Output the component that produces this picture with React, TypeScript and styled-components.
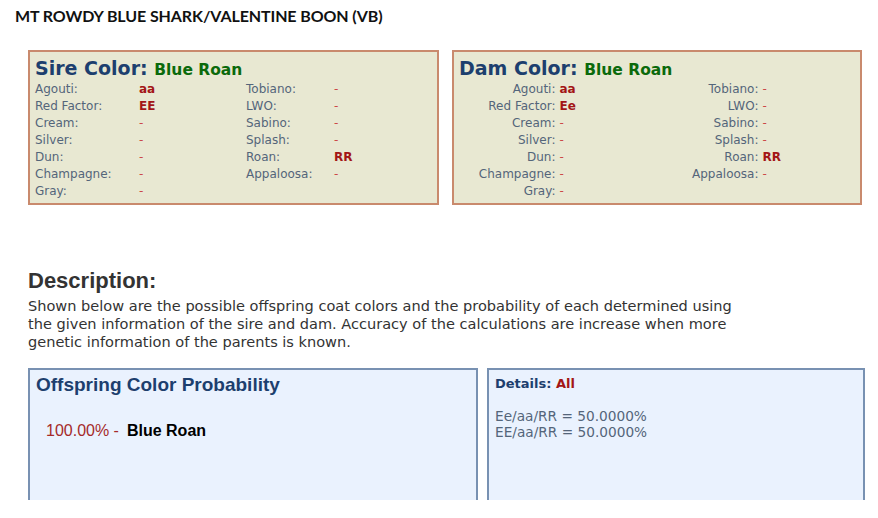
import React from "react";
import styled, { createGlobalStyle } from "styled-components";

const Global = createGlobalStyle`
  html, body { margin: 0; padding: 0; background: #ffffff; }
  body { width: 878px; height: 518px; overflow: hidden; }
`;

const Page = styled.div`
  padding: 6px 0 0 0;
`;

const Title = styled.h1`
  margin: 0 0 0 15px;
  font-family: Lato, "Open Sans", sans-serif;
  font-weight: 700;
  font-size: 16px;
  letter-spacing: -0.1px;
  line-height: 20px;
  color: #111111;
`;

const ColorRow = styled.div`
  display: flex;
  gap: 13px;
  margin: 24px 0 0 28px;
`;

const ColorCard = styled.section<{ $w: number }>`
  width: ${(p) => p.$w}px;
  box-sizing: border-box;
  border: 2px solid #c98a6d;
  background: #e8e8d2;
  padding: 5px 0 3px 5px;
  font-family: "DejaVu Sans", Verdana, sans-serif;
`;

const CardHeading = styled.h2`
  margin: 0;
  font-size: 19px;
  line-height: 22px;
  font-weight: 700;
  color: #1d3f6e;
`;

const HeadingValue = styled.span`
  font-size: 15.5px;
  color: #0b6a0b;
`;

const RowsText = styled.div`
  font-size: 12px;
  line-height: 17px;
`;

const GeneCol = styled.div<{ $cols: string }>`
  display: grid;
  grid-template-columns: ${(p) => p.$cols};
  grid-auto-rows: 17px;
`;

const Label = styled.span<{ $right?: boolean }>`
  color: #54657a;
  text-align: ${(p) => (p.$right ? "right" : "left")};
  white-space: nowrap;
`;

const Value = styled.span<{ $set?: boolean; $right?: boolean }>`
  color: ${(p) => (p.$set ? "#a31616" : "#cc4848")};
  font-weight: ${(p) => (p.$set ? 700 : 400)};
  padding-left: ${(p) => (p.$right ? "4px" : "0")};
  white-space: nowrap;
`;

const SireGrid = styled.div`
  display: grid;
  grid-template-columns: 211px 1fr;
`;

const DamGrid = styled.div`
  display: grid;
  grid-template-columns: 1fr 1fr;
  margin-left: -5px;
`;

const DescHeading = styled.h2`
  margin: 63px 0 0 28px;
  font-family: "Liberation Sans", Arial, sans-serif;
  font-weight: 700;
  font-size: 22px;
  line-height: 26px;
  color: #333333;
`;

const DescText = styled.p`
  margin: 3px 0 0 28px;
  width: 715px;
  font-family: "DejaVu Sans", Verdana, sans-serif;
  font-size: 14.55px;
  line-height: 18px;
  color: #333333;
`;

const ResultRow = styled.div`
  display: flex;
  gap: 9px;
  margin: 17px 0 0 28px;
`;

const ResultCard = styled.section<{ $w: number }>`
  width: ${(p) => p.$w}px;
  height: 132px;
  box-sizing: border-box;
  border: 2px solid #7891b2;
  border-bottom: none;
  background: #eaf2fe;
  padding: 4px 6px 0 6px;
`;

const ResultHeading = styled.h3`
  margin: 0;
  font-family: "Liberation Sans", Arial, sans-serif;
  font-weight: 700;
  font-size: 19px;
  line-height: 22px;
  color: #1d3f6e;
`;

const ProbRow = styled.div`
  margin: 25px 0 0 10px;
  font-family: "Liberation Sans", Arial, sans-serif;
  font-size: 16px;
  line-height: 20px;
  display: flex;
  gap: 8px;
`;

const Pct = styled.span`
  color: #a52a2a;
`;

const ProbName = styled.span`
  color: #000000;
  font-weight: 700;
`;

const DetailsHeading = styled.h3`
  margin: 2px 0 0 0;
  font-family: "DejaVu Sans", Verdana, sans-serif;
  font-weight: 700;
  font-size: 13px;
  line-height: 16px;
  color: #1d3f6e;
`;

const Red = styled.span`
  color: #a31616;
`;

const DetailList = styled.div`
  margin-top: 16px;
  font-family: "DejaVu Sans", Verdana, sans-serif;
  font-size: 13.7px;
  line-height: 16px;
  color: #54657a;
`;

type Gene = [string, string, boolean];

const sireLeft: Gene[] = [
  ["Agouti:", "aa", true],
  ["Red Factor:", "EE", true],
  ["Cream:", "-", false],
  ["Silver:", "-", false],
  ["Dun:", "-", false],
  ["Champagne:", "-", false],
  ["Gray:", "-", false],
];
const rightGenes: Gene[] = [
  ["Tobiano:", "-", false],
  ["LWO:", "-", false],
  ["Sabino:", "-", false],
  ["Splash:", "-", false],
  ["Roan:", "RR", true],
  ["Appaloosa:", "-", false],
];
const damLeft: Gene[] = [
  ["Agouti:", "aa", true],
  ["Red Factor:", "Ee", true],
  ["Cream:", "-", false],
  ["Silver:", "-", false],
  ["Dun:", "-", false],
  ["Champagne:", "-", false],
  ["Gray:", "-", false],
];

const GeneRows: React.FC<{ genes: Gene[]; right?: boolean }> = ({ genes, right }) => (
  <>
    {genes.map(([l, v, s]) => (
      <React.Fragment key={l}>
        <Label $right={right}>{l}</Label>
        <Value $set={s} $right={right}>
          {v}
        </Value>
      </React.Fragment>
    ))}
  </>
);

export default function App() {
  return (
    <Page>
      <Global />
      <Title>MT ROWDY BLUE SHARK/VALENTINE BOON (VB)</Title>
      <ColorRow>
        <ColorCard $w={411}>
          <CardHeading>
            Sire Color: <HeadingValue>Blue Roan</HeadingValue>
          </CardHeading>
          <RowsText>
            <SireGrid>
              <GeneCol $cols="104px 1fr">
                <GeneRows genes={sireLeft} />
              </GeneCol>
              <GeneCol $cols="88px 1fr">
                <GeneRows genes={rightGenes} />
              </GeneCol>
            </SireGrid>
          </RowsText>
        </ColorCard>
        <ColorCard $w={410}>
          <CardHeading>
            Dam Color: <HeadingValue>Blue Roan</HeadingValue>
          </CardHeading>
          <RowsText>
            <DamGrid>
              <GeneCol $cols="1fr 1fr">
                <GeneRows genes={damLeft} right />
              </GeneCol>
              <GeneCol $cols="1fr 1fr">
                <GeneRows genes={rightGenes} right />
              </GeneCol>
            </DamGrid>
          </RowsText>
        </ColorCard>
      </ColorRow>
      <DescHeading>Description:</DescHeading>
      <DescText>
        Shown below are the possible offspring coat colors and the probability of each determined using
        the given information of the sire and dam. Accuracy of the calculations are increase when more
        genetic information of the parents is known.
      </DescText>
      <ResultRow>
        <ResultCard $w={450}>
          <ResultHeading>Offspring Color Probability</ResultHeading>
          <ProbRow>
            <Pct>100.00% -</Pct>
            <ProbName>Blue Roan</ProbName>
          </ProbRow>
        </ResultCard>
        <ResultCard $w={378}>
          <DetailsHeading>
            Details: <Red>All</Red>
          </DetailsHeading>
          <DetailList>
            <div>Ee/aa/RR = 50.0000%</div>
            <div>EE/aa/RR = 50.0000%</div>
          </DetailList>
        </ResultCard>
      </ResultRow>
    </Page>
  );
}
